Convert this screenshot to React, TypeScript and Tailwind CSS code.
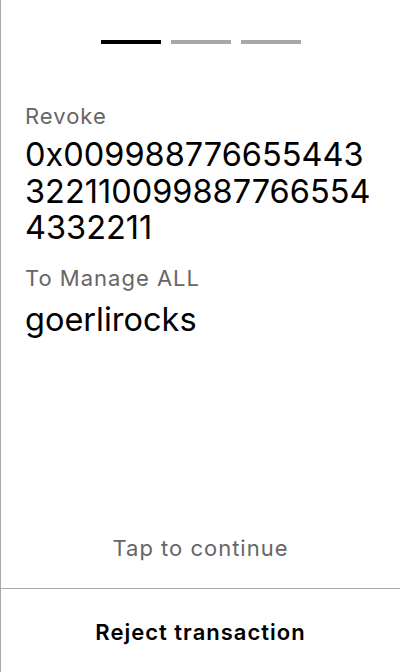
import React from 'react';

const steps = [true, false, false];

const App: React.FC = () => {
  return (
    <div
      className="flex h-[672px] w-[400px] flex-col border-l border-[#a8a8a8] bg-white text-black"
      style={{ fontFamily: 'Inter, "Noto Sans", sans-serif' }}
    >
      {/* Step indicator */}
      <div className="flex justify-center gap-[10px] pt-[40px]">
        {steps.map((active, i) => (
          <div key={i} className={`h-[4px] w-[60px] ${active ? 'bg-black' : 'bg-[#a8a8a8]'}`} />
        ))}
      </div>

      {/* Details */}
      <div className="flex flex-1 flex-col pl-[24px] pr-[25px] pt-[58px]">
        <div className="text-[22px] leading-[28px] tracking-[1px] text-[#666666]">Revoke</div>
        <div className="mt-[7px] break-all text-[32.5px] leading-[36.5px]">
          0x0099887766554433221100998877665544332211
        </div>
        <div className="mt-[17px] text-[22px] leading-[28px] tracking-[1px] text-[#666666]">To Manage ALL</div>
        <div className="mt-[10px] text-[32.5px] leading-[36.5px]">goerlirocks</div>
      </div>

      {/* Footer */}
      <div className="pb-[26px] text-center text-[22px] leading-[28px] tracking-[1px] text-[#666666]">
        Tap to continue
      </div>
      <button className="h-[84px] w-full border-t border-[#a8a8a8] pt-[3px] text-[22px] font-semibold leading-[28px] tracking-[1px]">
        Reject transaction
      </button>
    </div>
  );
};

export default App;
